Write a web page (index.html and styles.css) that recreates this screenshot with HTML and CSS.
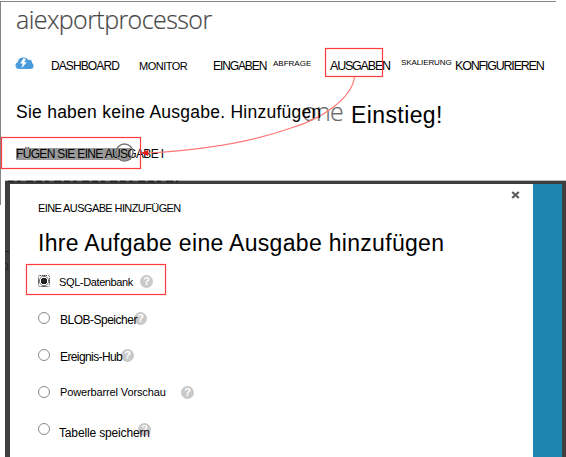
FILE: index.html
```html
<!DOCTYPE html>
<html lang="de">
<head>
<meta charset="utf-8">
<title>aiexportprocessor</title>
<link rel="stylesheet" href="styles.css">
</head>
<body>
<main class="page">
  <h1 class="title">aiexportprocessor</h1>
  <nav class="nav">
    <svg class="cloud" width="19" height="13" viewBox="0 0 19 13"><path fill="#4a9bdc" d="M4 12C-.5 12-.5 6 3 5 3 2 5 .5 8 .5 11 .3 12.500 1.500 13 3c2.500-.8 4.300.7 4 3 2.500 1.500 2 6-1.500 6z"/><path fill="#fff" d="M8.500 1.300L5.200 6.500h2.600L6.300 11.500 11.800 5.300H9.200L11 2z"/></svg>
    <a class="item dashboard">DASHBOARD</a>
    <a class="item monitor">MONITOR</a>
    <a class="item inputs">EINGABEN</a>
    <a class="item query">ABFRAGE</a>
    <a class="item outputs">AUSGABEN</a>
    <a class="item scale">SKALIERUNG</a>
    <a class="item configure">KONFIGURIEREN</a>
  </nav>
  <div class="message">
    <span class="empty">Sie haben keine Ausgabe. Hinzufügen</span>
    <span class="one">one</span>
    <span class="start">Einstieg!</span>
  </div>
  <div class="add"><span class="add-text">FÜGEN SIE EINE AUSGABE I</span></div>
  <section class="dialog">
    <div class="panel">
      <div class="caption">EINE AUSGABE HINZUFÜGEN</div>
      <h2 class="heading">Ihre Aufgabe eine Ausgabe hinzufügen</h2>
      <div class="options">
        <label class="option sql"><i class="radio checked"></i><span class="name">SQL-Datenbank</span><b class="help">?</b></label>
        <label class="option blob"><i class="radio"></i><span class="name">BLOB-Speicher</span><b class="help">?</b></label>
        <label class="option hub"><i class="radio"></i><span class="name">Ereignis-Hub</span><b class="help">?</b></label>
        <label class="option power"><i class="radio"></i><span class="name">Powerbarrel Vorschau</span><b class="help">?</b></label>
        <label class="option table"><i class="radio"></i><span class="name">Tabelle speichern</span><b class="help">?</b></label>
      </div>
      <svg class="close" width="9" height="8" viewBox="0 0 9 8"><path d="M1.200 1l6.600 6M7.800 1L1.200 7" stroke="#5c5c5c" stroke-width="2.200"/></svg>
    </div>
    <div class="side"></div>
  </section>
  <svg class="marks" width="566" height="457" viewBox="0 0 566 457" fill="none">
    <circle cx="124.500" cy="152.500" r="8.500" stroke="#777" stroke-width="1.500"/>
    <g stroke="#ff3b3b" stroke-width="1.200">
      <rect x="325.500" y="48.500" width="57" height="28"/>
      <rect x="1.500" y="137.500" width="139" height="31"/>
      <rect x="26.500" y="264.500" width="139" height="30"/>
      <path stroke="#ff7777" d="M354.500 77C352 98 322 119 291 128C252 142 205 150 148 153"/>
    </g>
    <path fill="#f01818" d="M141 153l7-3v6z"/>
    <path stroke="#222" stroke-width="1.500" stroke-dasharray="6 3 4 5 7 3" d="M8 181.500H178"/>
    <path stroke="#222" d="M5 251.500h4M5 263.500c4-1 4 7 0 6"/>
  </svg>
</main>
</body>
</html>
```

FILE: styles.css
```css
* { box-sizing: border-box; }
body { margin: 0; background: #fff; color: #000; font-family: "Liberation Sans", Arial, sans-serif; }
.page { position: relative; width: 566px; height: 457px; overflow: hidden; background: linear-gradient(#858585, #858585) 0 1px / 556px 1px no-repeat, linear-gradient(#858585, #858585) 0 1px / 1px 204px no-repeat, #fff; }
.title { margin: 0; padding: 3px 0 0 16px; height: 50px; font: 300 25px/32px "Open Sans", sans-serif; color: #444; letter-spacing: -.57px; -webkit-text-stroke: .2px #555; }
.nav { display: flex; height: 50px; padding-left: 15px; }
.cloud { margin-top: 7px; flex: none; }
.item { flex: none; white-space: nowrap; line-height: 16px; padding-top: 8px; }
.dashboard { margin-left: 17px; width: 88px; font-size: 12px; letter-spacing: -.9px; }
.monitor { width: 74px; font-size: 11px; letter-spacing: -.5px; }
.inputs { width: 60px; font-size: 12px; letter-spacing: -1.1px; }
.query { width: 57px; font-size: 8px; padding-top: 6px; }
.outputs { width: 71px; font-size: 12.5px; letter-spacing: -1.2px; }
.scale { width: 54px; font-size: 8px; letter-spacing: -.1px; padding-top: 5px; }
.configure { font-size: 12.5px; letter-spacing: -1.2px; }
.message { display: flex; height: 46px; padding-left: 16px; white-space: nowrap; }
.empty { width: 286px; font-size: 17.5px; line-height: 24px; letter-spacing: .25px; z-index: 1; }
.one { width: 49px; margin-top: -4px; font: 300 25px/30px "Open Sans", sans-serif; color: #666; letter-spacing: -.7px; -webkit-text-stroke: .2px #777; }
.start { font-size: 23px; line-height: 30px; letter-spacing: .4px; }
.add { height: 34px; padding: 2px 0 0 16px; font-size: 12px; line-height: 12px; letter-spacing: -.67px; white-space: nowrap; }
.add-text { display: inline-block; height: 12px; background: linear-gradient(#999, #999) 0 0 / 115px 12px no-repeat; }
.dialog { display: flex; width: 561px; height: 277px; margin-left: 5px; padding: 3px 4px 0 5px; border-top: 1px solid #bbb; background: #3d3f41; }
.panel { position: relative; flex: 1; background: #fff; padding: 17px 0 0 28px; }
.caption { height: 28px; font-size: 11px; line-height: 14px; letter-spacing: -.6px; }
.heading { margin: 0; height: 36px; font-size: 23px; font-weight: 400; line-height: 28px; letter-spacing: .31px; white-space: nowrap; }
.side { width: 29px; background: #1e84b0; }
.option { display: flex; height: 37px; padding-top: 10px; white-space: nowrap; }
.radio { flex: none; width: 12px; height: 12px; border: 1.500px solid #888; border-radius: 50%; }
.name { line-height: 14px; margin: 1px 0 0 10px; z-index: 1; }
.help { flex: none; width: 13px; height: 13px; border-radius: 50%; background: #c9c9c9; color: #fff; font-size: 11px; line-height: 13px; text-align: center; }
.checked { border: 1px dotted #444; border-radius: 2px; background: radial-gradient(circle, #222 0 3px, #fff 3.500px 4px, #777 4.500px, #fff 5.500px); }
.sql .name { font-size: 11px; letter-spacing: -.38px; width: 81px; margin: 0 0 0 9px; }
.blob .name { font-size: 12px; letter-spacing: -.5px; width: 74px; }
.hub .name { font-size: 12px; letter-spacing: -.6px; width: 61px; }
.power .name { font-size: 11px; letter-spacing: -.13px; width: 121px; margin-top: -1px; }
.table .name { font-size: 12px; letter-spacing: -.15px; width: 79px; margin: 3px 0 0 9px; }
.close { position: absolute; left: 501px; top: 7px; }
.marks { position: absolute; left: 0; top: 0; pointer-events: none; }
```
